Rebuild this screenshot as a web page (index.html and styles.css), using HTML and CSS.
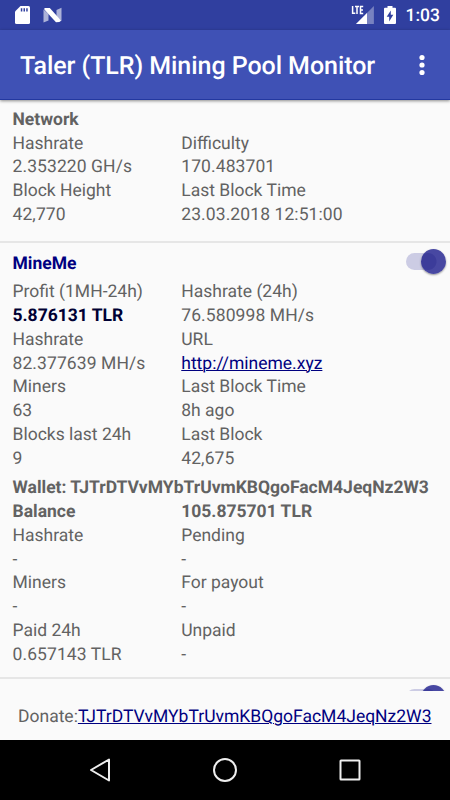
FILE: index.html
```html
<!DOCTYPE html>
<html lang="en">
<head>
<meta charset="utf-8">
<title>Taler (TLR) Mining Pool Monitor</title>
<link rel="stylesheet" href="styles.css">
</head>
<body>
<div class="screen">
  <div class="status">
    <svg class="status-left" width="80" height="30" viewBox="0 0 80 30">
      <path fill="#fff" d="M20.5 6H28.5Q30 6 30 7.500V22.500Q30 24 28.500 24H16.500Q15 24 15 22.500V11.500Z"/>
      <path fill="#303f9f" d="M20.800 8.300h1.500v3.200h-1.500zM23.500 8.300h1.500v3.200h-1.500zM26.200 8.300h1.500v3.200h-1.500z"/>
      <path fill="#fff" opacity=".6" d="M43.500 9.500L48.500 14V20.500L43.500 22.500ZM61.500 7.800V21L56.500 16.500V10Z"/>
      <path fill="#fff" d="M44.500 8L49.800 8L61.200 20.800Q60 22.300 56 22.300L44.300 9.500Z"/>
    </svg>
    <div class="status-right">
      <svg width="48" height="30" viewBox="0 0 48 30">
        <path fill="#fff" opacity=".35" d="M23.900 6V24H6Z"/>
        <path fill="#303f9f" d="M0 0H14.500V16H0z"/>
        <path fill="none" stroke="#fff" stroke-width="1.500" d="M2.600 6v7.300h2.700M5 6.600h4M7 6.600V14M13.200 6.600H10.500V13.400H13.200M10.500 10H13"/>
        <path fill="#fff" d="M17 13V24H6Z"/>
        <path fill="#fff" d="M37.500 6h5v1.800H45q1 0 1 1V23q0 1-1 1H35q-1 0-1-1V8.800q0-1 1-1h2.500z"/>
        <path fill="#303f9f" d="M40.800 10.500v4.300h2.500L39.200 21.500v-4.700h-2.500z"/>
      </svg>
      <span class="clock">1:03</span>
    </div>
  </div>
  <header class="appbar">
    <h1>Taler (TLR) Mining Pool Monitor</h1>
    <svg width="6" height="22" viewBox="0 0 6 22" fill="#fff"><circle cx="3" cy="3.500" r="2.600"/><circle cx="3" cy="11" r="2.600"/><circle cx="3" cy="18.500" r="2.600"/></svg>
  </header>
  <main class="list">
    <section class="network">
      <div class="row bold">Network</div>
      <div class="grid">
        <span>Hashrate</span><span>Difficulty</span>
        <span class="num">2.353220 GH/s</span><span class="num">170.483701</span>
        <span>Block Height</span><span>Last Block Time</span>
        <span class="num">42,770</span><span class="num">23.03.2018 12:51:00</span>
      </div>
    </section>
    <section class="pool">
      <div class="pool-head"><span class="name">MineMe</span><span class="switch"></span></div>
      <div class="grid">
        <span>Profit (1MH-24h)</span><span>Hashrate (24h)</span>
        <span class="profit">5.876131 TLR</span><span class="num">76.580998 MH/s</span>
        <span>Hashrate</span><span>URL</span>
        <span class="num">82.377639 MH/s</span><span><a>http://mineme.xyz</a></span>
        <span>Miners</span><span>Last Block Time</span>
        <span>63</span><span>8h ago</span>
        <span>Blocks last 24h</span><span>Last Block</span>
        <span>9</span><span class="num">42,675</span>
      </div>
      <div class="row bold wallet">Wallet: <span class="address">TJTrDTVvMYbTrUvmKBQgoFacM4JeqNz2W3</span></div>
      <div class="grid">
        <span class="bold">Balance</span><span class="bold">105.875701 TLR</span>
        <span>Hashrate</span><span>Pending</span>
        <span>-</span><span>-</span>
        <span>Miners</span><span>For payout</span>
        <span>-</span><span>-</span>
        <span>Paid 24h</span><span>Unpaid</span>
        <span class="num">0.657143 TLR</span><span>-</span>
      </div>
    </section>
    <section class="pool next">
      <div class="pool-head"><span></span><span class="switch"></span></div>
    </section>
  </main>
  <footer class="donate"><span>Donate:</span><a>TJTrDTVvMYbTrUvmKBQgoFacM4JeqNz2W3</a></footer>
  <nav class="navbar">
    <svg width="450" height="60" viewBox="0 0 450 60" fill="none" stroke="#eee" stroke-width="2" stroke-linejoin="round">
      <path d="M91 30L109 19.500V40.500Z"/><circle cx="225" cy="30" r="11"/><rect x="340.500" y="20.500" width="19" height="19" rx=".5"/>
    </svg>
  </nav>
</div>
</body>
</html>
```

FILE: styles.css
```css
* { box-sizing: border-box; }
body { margin: 0; }
.screen {
  width: 450px;
  height: 800px;
  overflow: hidden;
  display: flex;
  flex-direction: column;
  background: #fafafa;
  color: #626262;
  font: 17.5px/24px Roboto, sans-serif;
  text-rendering: geometricPrecision;
  white-space: nowrap;
}
.status {
  flex: none;
  height: 30px;
  display: flex;
  justify-content: space-between;
  background: #303f9f;
  color: #fff;
}
.status-right { display: flex; align-items: center; padding-right: 10px; }
.clock { margin-left: 8px; font-size: 17.5px; font-weight: 500; line-height: 30px; padding-top: 1px; }
.appbar {
  flex: none;
  height: 70px;
  padding: 5px 25px 0 20px;
  display: flex;
  align-items: center;
  justify-content: space-between;
  background: #3f51b5;
  border-bottom: 1px solid #2338a0;
  box-shadow: 0 1px 3px rgba(0, 0, 0, .45);
  color: #fff;
  position: relative;
}
.appbar svg { margin-top: -5px; }
h1 { margin: 0; font-size: 25px; line-height: 34px; font-weight: 500; letter-spacing: -.06px; }
.list { flex: none; height: 591px; overflow: hidden; }
.network { height: 143px; padding: 7.75px 12.5px 0; border-bottom: 2px solid #e6e6e6; }
.grid {
  display: grid;
  grid-template-columns: 168.75px 1fr;
  grid-auto-rows: 23.75px;
}
.row { height: 23.75px; }
.num { letter-spacing: .09px; }
.bold { font-weight: 700; }
.pool { height: 436px; padding: 0 12.5px; border-bottom: 2px solid #e6e6e6; }
.pool-head {
  height: 37.4px;
  padding-top: 9px;
  margin-right: -8px;
  display: flex;
  justify-content: space-between;
}
.name { color: #000080; font-weight: 700; }
.profit { color: #000033; font-weight: 700; }
.wallet { margin-top: 6px; }
a { color: #000080; text-decoration: underline; text-decoration-thickness: 1px; }
.switch {
  width: 40px;
  height: 25px;
  margin-top: -3px;
  position: relative;
}
.switch::before {
  content: "";
  position: absolute;
  left: 0;
  top: 4px;
  width: 31px;
  height: 17px;
  border-radius: 9px;
  background: #cccce4;
}
.switch::after {
  content: "";
  position: absolute;
  right: 0;
  top: 0;
  width: 25px;
  height: 25px;
  border-radius: 50%;
  background: radial-gradient(circle at 7px 12.5px, #3c3c9a 8px, #4848a2 9px);
  box-shadow: 0 1px 2px rgba(0, 0, 0, .4);
}
.next { border: 0; }
.donate { height: 49px; flex: none; padding: 14px 0 0 18px; }
.navbar { height: 60px; flex: none; background: #000; }
.navbar svg { display: block; }
```
